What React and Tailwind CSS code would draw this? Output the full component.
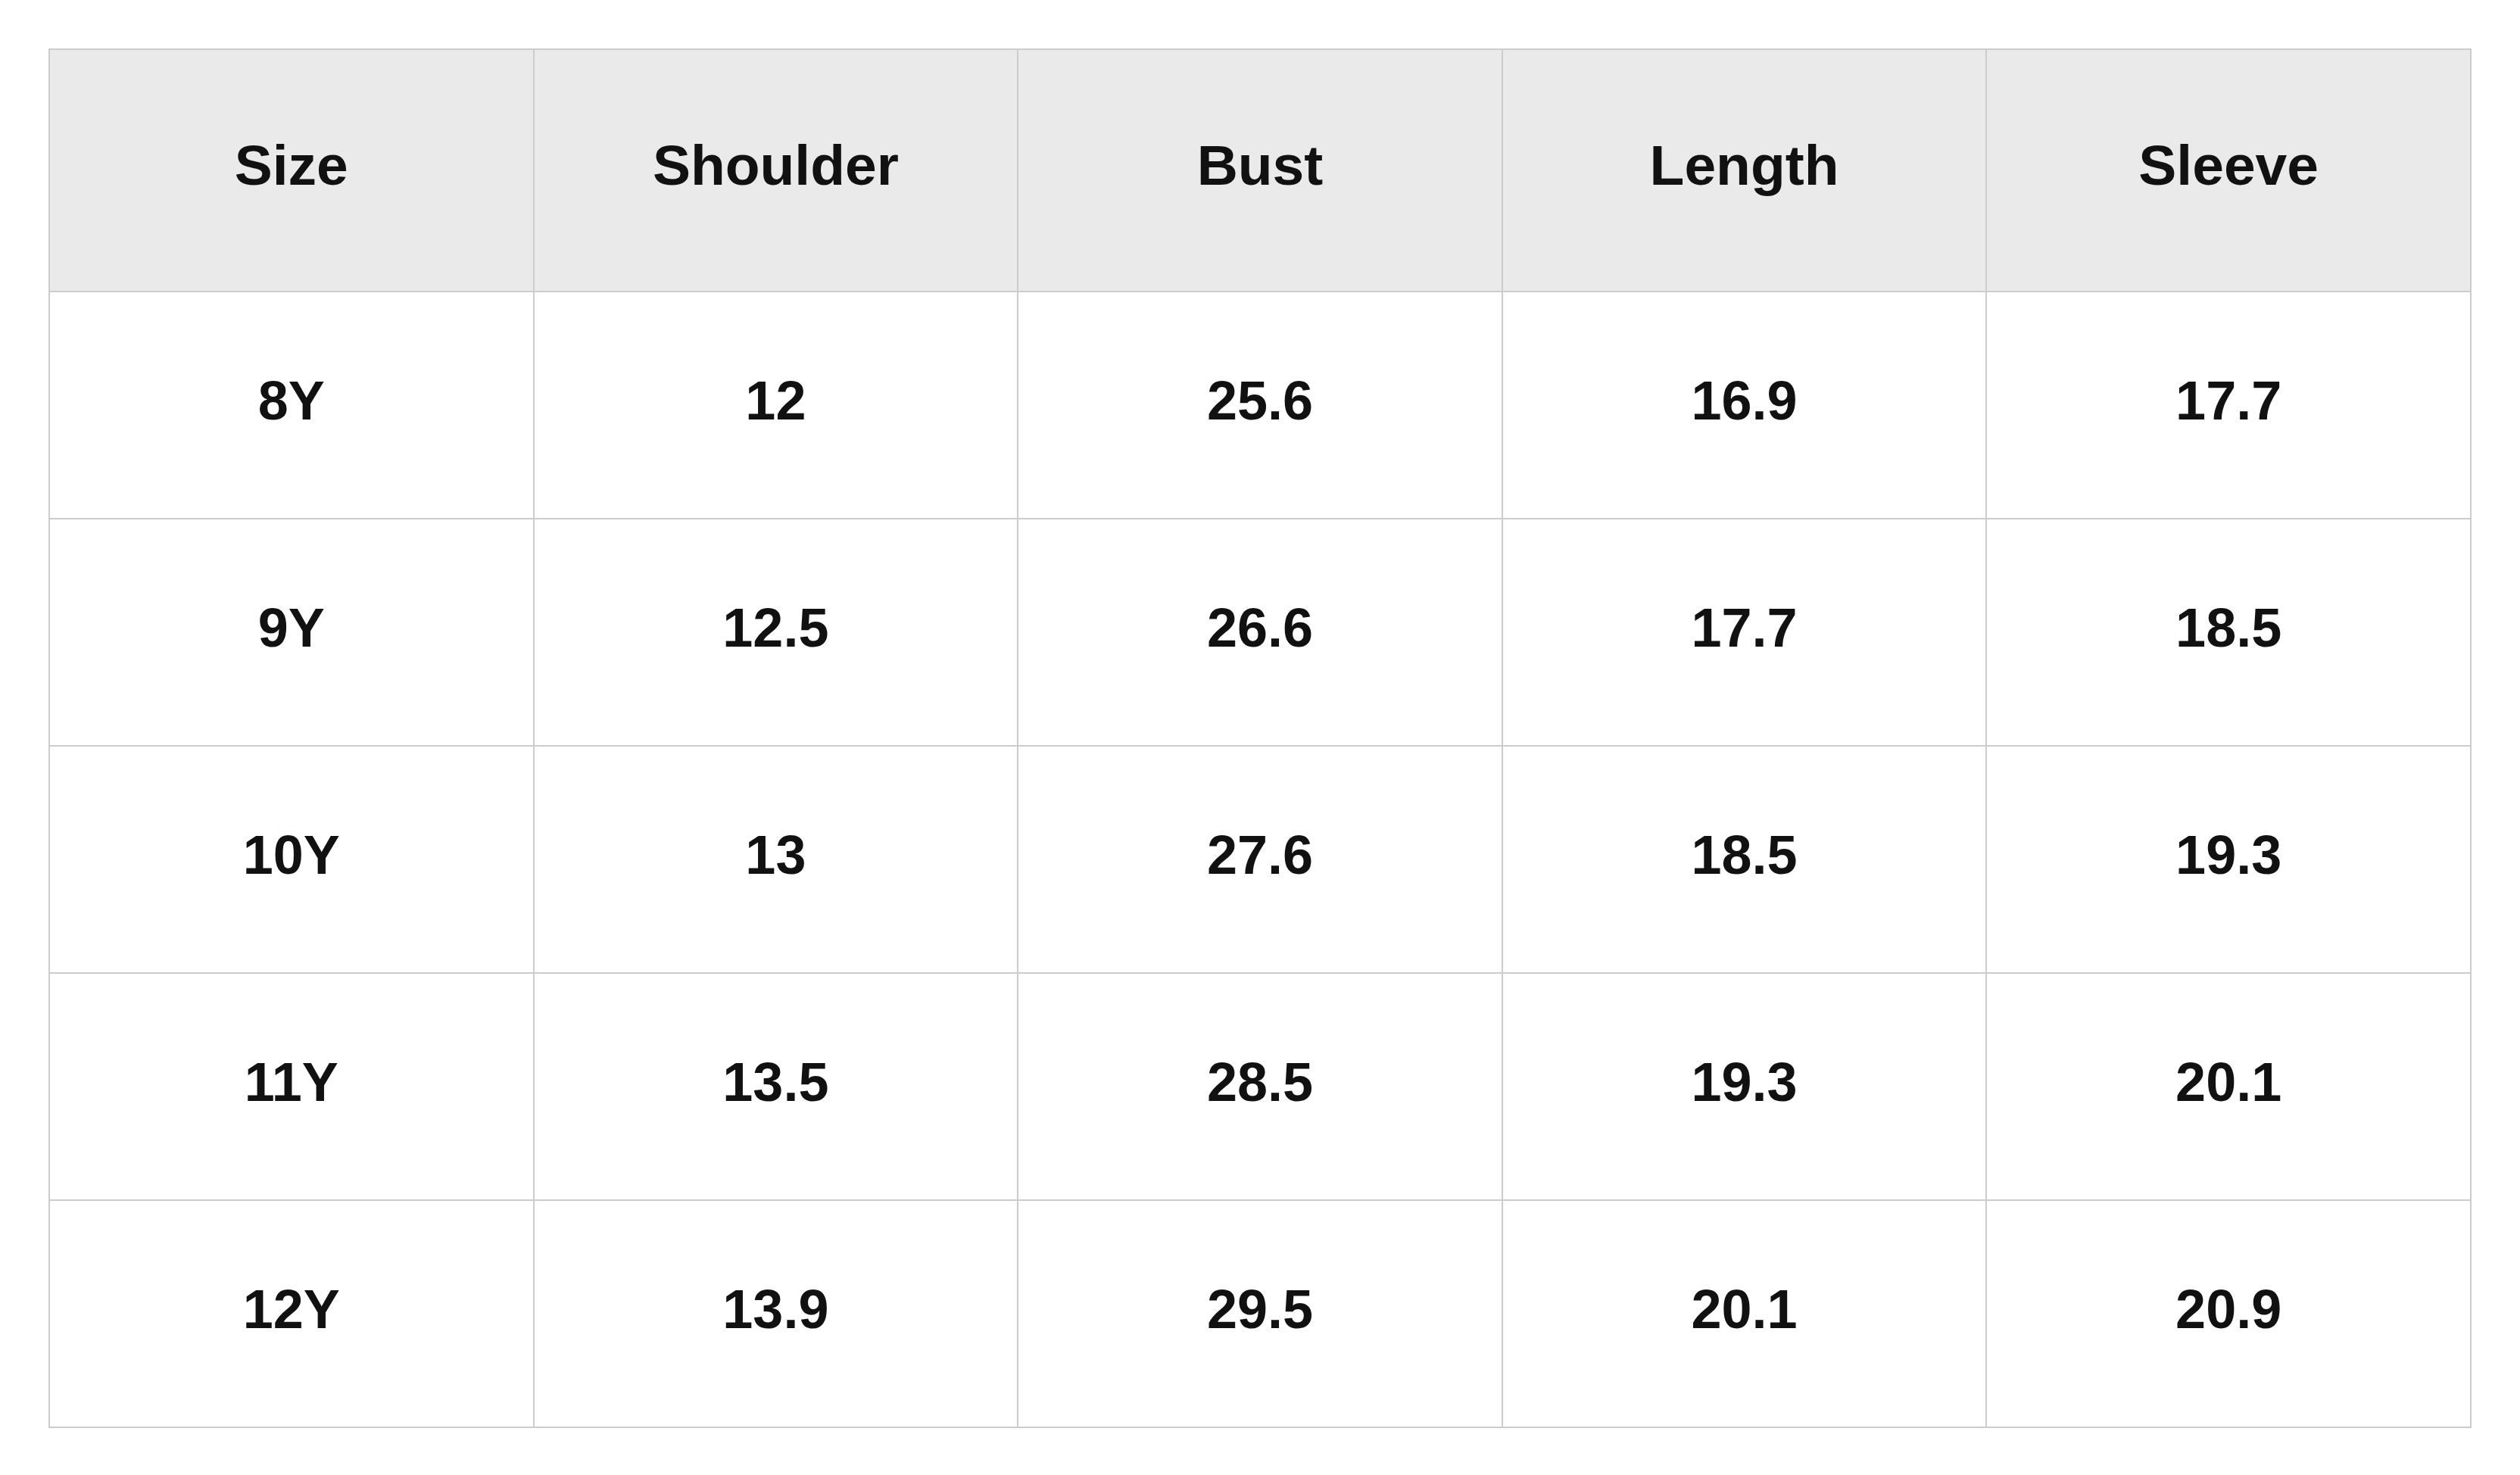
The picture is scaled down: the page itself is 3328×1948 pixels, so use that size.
const headers = ['Size', 'Shoulder', 'Bust', 'Length', 'Sleeve'];

const rows = [
  ['8Y', '12', '25.6', '16.9', '17.7'],
  ['9Y', '12.5', '26.6', '17.7', '18.5'],
  ['10Y', '13', '27.6', '18.5', '19.3'],
  ['11Y', '13.5', '28.5', '19.3', '20.1'],
  ['12Y', '13.9', '29.5', '20.1', '20.9'],
];

export default function App() {
  return (
    <div className="min-h-screen bg-white p-[64px] font-['Liberation_Sans',Arial,sans-serif] text-[#111111]">
      <table className="w-[3200px] table-fixed border-collapse border-2 border-[#cccccc]">
        <thead>
          <tr className="h-[320px] bg-[#eaeaea]">
            {headers.map((h) => (
              <th key={h} className="border-2 border-[#cccccc] pb-[14px] text-center text-[75px] font-bold">
                {h}
              </th>
            ))}
          </tr>
        </thead>
        <tbody>
          {rows.map((row) => (
            <tr key={row[0]} className="h-[300px]">
              {row.map((cell, i) => (
                <td key={i} className="border-2 border-[#cccccc] pb-[12px] text-center text-[72px] font-bold">
                  {cell}
                </td>
              ))}
            </tr>
          ))}
        </tbody>
      </table>
    </div>
  );
}
